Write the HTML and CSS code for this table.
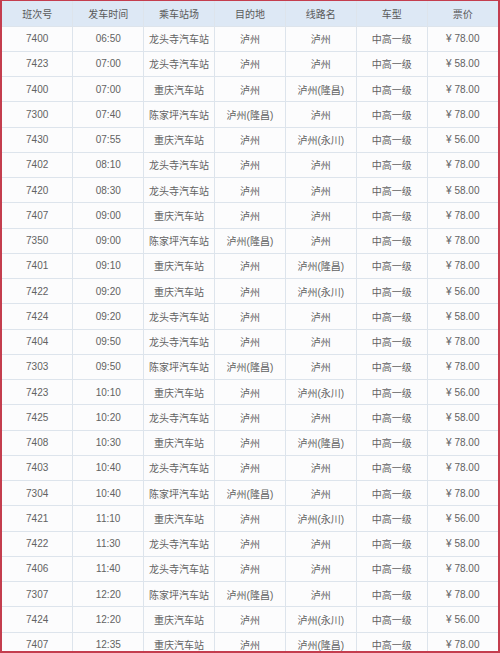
FILE: index.html
```html
<!DOCTYPE html>
<html lang="zh-CN">
<head>
<meta charset="utf-8">
<link rel="stylesheet" href="styles.css">
</head>
<body>
<div class="frame">
<table class="schedule">
<thead>
<tr><th>班次号</th><th>发车时间</th><th>乘车站场</th><th>目的地</th><th>线路名</th><th>车型</th><th>票价</th></tr>
</thead>
<tbody>
<tr><td>7400</td><td>06:50</td><td>龙头寺汽车站</td><td>泸州</td><td>泸州</td><td>中高一级</td><td>¥ 78.00</td></tr>
<tr><td>7423</td><td>07:00</td><td>龙头寺汽车站</td><td>泸州</td><td>泸州</td><td>中高一级</td><td>¥ 58.00</td></tr>
<tr><td>7400</td><td>07:00</td><td>重庆汽车站</td><td>泸州</td><td>泸州(隆昌)</td><td>中高一级</td><td>¥ 78.00</td></tr>
<tr><td>7300</td><td>07:40</td><td>陈家坪汽车站</td><td>泸州(隆昌)</td><td>泸州</td><td>中高一级</td><td>¥ 78.00</td></tr>
<tr><td>7430</td><td>07:55</td><td>重庆汽车站</td><td>泸州</td><td>泸州(永川)</td><td>中高一级</td><td>¥ 56.00</td></tr>
<tr><td>7402</td><td>08:10</td><td>龙头寺汽车站</td><td>泸州</td><td>泸州</td><td>中高一级</td><td>¥ 78.00</td></tr>
<tr><td>7420</td><td>08:30</td><td>龙头寺汽车站</td><td>泸州</td><td>泸州</td><td>中高一级</td><td>¥ 58.00</td></tr>
<tr><td>7407</td><td>09:00</td><td>重庆汽车站</td><td>泸州</td><td>泸州</td><td>中高一级</td><td>¥ 78.00</td></tr>
<tr><td>7350</td><td>09:00</td><td>陈家坪汽车站</td><td>泸州(隆昌)</td><td>泸州</td><td>中高一级</td><td>¥ 78.00</td></tr>
<tr><td>7401</td><td>09:10</td><td>重庆汽车站</td><td>泸州</td><td>泸州(隆昌)</td><td>中高一级</td><td>¥ 78.00</td></tr>
<tr><td>7422</td><td>09:20</td><td>重庆汽车站</td><td>泸州</td><td>泸州(永川)</td><td>中高一级</td><td>¥ 56.00</td></tr>
<tr><td>7424</td><td>09:20</td><td>龙头寺汽车站</td><td>泸州</td><td>泸州</td><td>中高一级</td><td>¥ 58.00</td></tr>
<tr><td>7404</td><td>09:50</td><td>龙头寺汽车站</td><td>泸州</td><td>泸州</td><td>中高一级</td><td>¥ 78.00</td></tr>
<tr><td>7303</td><td>09:50</td><td>陈家坪汽车站</td><td>泸州(隆昌)</td><td>泸州</td><td>中高一级</td><td>¥ 78.00</td></tr>
<tr><td>7423</td><td>10:10</td><td>重庆汽车站</td><td>泸州</td><td>泸州(永川)</td><td>中高一级</td><td>¥ 56.00</td></tr>
<tr><td>7425</td><td>10:20</td><td>龙头寺汽车站</td><td>泸州</td><td>泸州</td><td>中高一级</td><td>¥ 58.00</td></tr>
<tr><td>7408</td><td>10:30</td><td>重庆汽车站</td><td>泸州</td><td>泸州(隆昌)</td><td>中高一级</td><td>¥ 78.00</td></tr>
<tr><td>7403</td><td>10:40</td><td>龙头寺汽车站</td><td>泸州</td><td>泸州</td><td>中高一级</td><td>¥ 78.00</td></tr>
<tr><td>7304</td><td>10:40</td><td>陈家坪汽车站</td><td>泸州(隆昌)</td><td>泸州</td><td>中高一级</td><td>¥ 78.00</td></tr>
<tr><td>7421</td><td>11:10</td><td>重庆汽车站</td><td>泸州</td><td>泸州(永川)</td><td>中高一级</td><td>¥ 56.00</td></tr>
<tr><td>7422</td><td>11:30</td><td>龙头寺汽车站</td><td>泸州</td><td>泸州</td><td>中高一级</td><td>¥ 58.00</td></tr>
<tr><td>7406</td><td>11:40</td><td>龙头寺汽车站</td><td>泸州</td><td>泸州</td><td>中高一级</td><td>¥ 78.00</td></tr>
<tr><td>7307</td><td>12:20</td><td>陈家坪汽车站</td><td>泸州(隆昌)</td><td>泸州</td><td>中高一级</td><td>¥ 78.00</td></tr>
<tr><td>7424</td><td>12:20</td><td>重庆汽车站</td><td>泸州</td><td>泸州(永川)</td><td>中高一级</td><td>¥ 56.00</td></tr>
<tr><td>7407</td><td>12:35</td><td>重庆汽车站</td><td>泸州</td><td>泸州(隆昌)</td><td>中高一级</td><td>¥ 78.00</td></tr>
</tbody>
</table>
</div>
</body>
</html>
```
FILE: styles.css
```css
html, body {
  margin: 0;
  padding: 0;
  background: #ffffff;
}

.frame {
  box-sizing: border-box;
  width: 500px;
  height: 653px;
  overflow: hidden;
  border: 2px solid #c43d4e;
  border-top-width: 1px;
}

.schedule {
  width: 100%;
  table-layout: fixed;
  border-collapse: collapse;
  font-family: "Liberation Sans", "Noto Sans CJK SC", sans-serif;
  font-size: 10px;
  color: #626262;
}

.schedule th,
.schedule td {
  text-align: center;
  vertical-align: middle;
  padding: 0;
  border: 1px solid #dde4ec;
  white-space: nowrap;
  overflow: hidden;
}

.schedule thead tr {
  height: 25px;
}

.schedule th {
  font-weight: normal;
  background: #dde8f5;
  color: #5a5a5a;
  border-top: none;
}

.schedule tbody tr {
  height: 25.25px;
}

.schedule td {
  background: #fcfcfd;
}

.schedule th:first-child,
.schedule td:first-child {
  border-left: none;
}

.schedule th:last-child,
.schedule td:last-child {
  border-right: none;
}
```
